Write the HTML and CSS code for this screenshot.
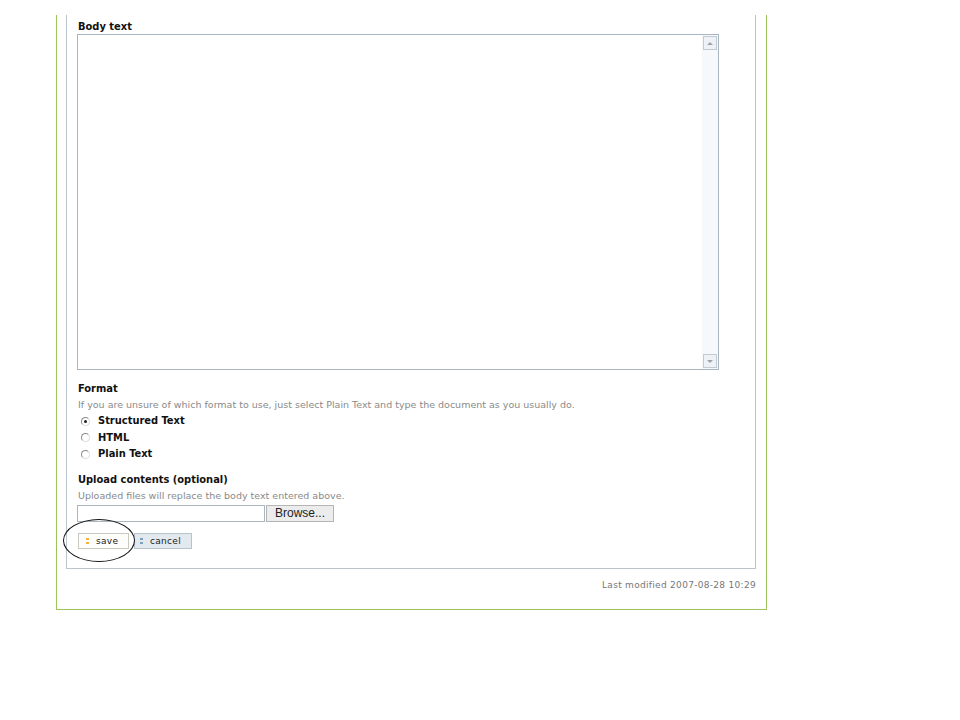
FILE: index.html
```html
<!DOCTYPE html>
<html>
<head>
<meta charset="utf-8">
<link rel="stylesheet" href="styles.css">
</head>
<body>
<div class="outer">
  <div class="inner">
    <div class="label">Body text</div>
    <div class="textarea">
      <div class="scroll">
        <div class="arrow up"><span></span></div>
        <div class="track"></div>
        <div class="arrow down"><span></span></div>
      </div>
    </div>
    <div class="label l-format">Format</div>
    <div class="help">If you are unsure of which format to use, just select Plain Text and type the document as you usually do.</div>
    <div class="radios">
      <div class="radio"><span class="rb checked"></span>Structured Text</div>
      <div class="radio"><span class="rb"></span>HTML</div>
      <div class="radio"><span class="rb"></span>Plain Text</div>
    </div>
    <div class="label l-upload">Upload contents (optional)</div>
    <div class="help">Uploaded files will replace the body text entered above.</div>
    <div class="filerow">
      <div class="fileinput"></div>
      <div class="browse">Browse...</div>
    </div>
    <div class="buttons">
      <div class="btn save"><span class="dots"><i></i><i></i></span>save</div>
      <div class="btn cancel"><span class="dots"><i></i><i></i></span>cancel</div>
      <div class="ellipse"></div>
    </div>
  </div>
  <div class="modified">Last modified 2007-08-28 10:29</div>
</div>
</body>
</html>
```
FILE: styles.css
```css
html, body { margin: 0; padding: 0; background: #fff; }
body { font-family: "DejaVu Sans", Verdana, sans-serif; }
.outer {
  margin: 15px 0 0 56px;
  height: 594px;
  border-left: 1px solid #9cc45c;
  border-right: 1px solid #9cc45c;
  border-bottom: 1px solid #9cc45c;
  padding: 0 10px 0 9px;
  box-sizing: content-box;
  width: 690px;
}
.inner {
  border-left: 1px solid #b9c6cf;
  border-right: 1px solid #b9c6cf;
  border-bottom: 1px solid #b9c6cf;
  height: 553px;
  padding: 0 0 0 10px;
  position: relative;
}
.label {
  font-family: "DejaVu Sans Condensed", "DejaVu Sans", sans-serif;
  font-size: 11px;
  font-weight: bold;
  color: #111;
  line-height: 13px;
  padding-top: 5px;
  padding-left: 1px;
}
.textarea {
  width: 640px;
  height: 334px;
  border: 1px solid #a8b6c2;
  margin-top: 1px;
  position: relative;
  background: #fff;
}
.scroll {
  position: absolute;
  right: 0; top: 0; bottom: 0;
  width: 16px;
  background: #f6f8fb;
  display: flex;
  flex-direction: column;
}
.arrow {
  height: 14px;
  margin: 1px;
  border: 1px solid #c3cad2;
  background: #eef1f5;
  box-sizing: border-box;
  display: flex;
  align-items: center;
  justify-content: center;
}
.arrow span {
  width: 0; height: 0;
  border-left: 3px solid transparent;
  border-right: 3px solid transparent;
}
.arrow.up span { border-bottom: 3px solid #9aa4ae; }
.arrow.down span { border-top: 3px solid #9aa4ae; }
.track { flex: 1; }
.l-format { padding-top: 12px; }
.help {
  font-size: 9.5px;
  color: #8a8a8a;
  line-height: 13px;
  margin-top: 3px;
  padding-left: 1px;
}
.radios { margin-top: 2px; }
.radio {
  font-family: "DejaVu Sans Condensed", "DejaVu Sans", sans-serif;
  font-size: 11px;
  font-weight: bold;
  color: #111;
  height: 16.5px;
  line-height: 16px;
  display: flex;
  align-items: center;
  padding-left: 4px;
}
.rb {
  width: 7px; height: 7px;
  border-radius: 50%;
  border: 1px solid #8a8a8a;
  border-right-color: #ddd;
  border-bottom-color: #ddd;
  margin-right: 8px;
  position: relative;
}
.rb.checked::after {
  content: "";
  position: absolute;
  left: 2px; top: 2px;
  width: 3px; height: 3px;
  background: #222;
  border-radius: 50%;
}
.l-upload { padding-top: 10px; }
.filerow {
  display: flex;
  margin-top: 3px;
  gap: 1px;
}
.fileinput {
  width: 186px;
  height: 15px;
  border: 1px solid #a8b6c2;
}
.browse {
  width: 68px;
  height: 17px;
  box-sizing: border-box;
  border: 1px solid #b5b5b5;
  background: #ececec;
  font-family: "Liberation Sans", Arial, sans-serif;
  font-size: 12px;
  line-height: 15px;
  text-align: center;
  color: #222;
}
.buttons {
  display: flex;
  gap: 5px;
  margin-top: 11px;
  padding-left: 1px;
  position: relative;
}
.btn {
  height: 16px;
  box-sizing: border-box;
  border: 1px solid #b8c4cc;
  font-size: 9px;
  line-height: 14px;
  color: #222;
  display: flex;
  align-items: center;
  letter-spacing: 0.3px;
}
.save { width: 51px; background: #fdfdfb; padding-left: 7px; border-color: #c9c9bd; }
.cancel { width: 58px; background: #e2eaf0; padding-left: 5px; }
.dots {
  display: flex;
  flex-direction: column;
  gap: 2px;
  margin-right: 7px;
}
.dots i {
  display: block;
  width: 3px; height: 2px;
}
.save .dots i { background: #f0b43c; }
.cancel .dots i { background: #7fa3bf; }
.ellipse {
  position: absolute;
  left: -14px; top: -14px;
  width: 70px; height: 41px;
  border: 1px solid #111;
  border-radius: 50%;
}
.modified {
  text-align: right;
  font-size: 9px;
  color: #777;
  padding-top: 11px;
  letter-spacing: 0.3px;
}
```
